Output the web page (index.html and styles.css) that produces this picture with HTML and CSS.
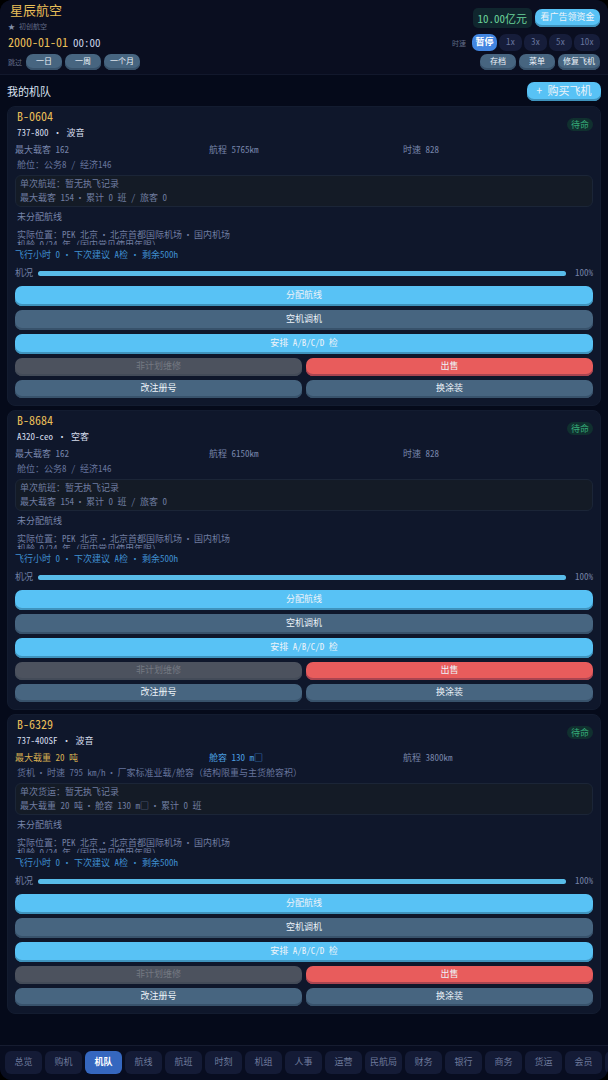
FILE: index.html
```html
<!DOCTYPE html>
<html lang="zh-CN">
<head>
<meta charset="utf-8">
<meta name="viewport" content="width=device-width, initial-scale=1">
<title>星辰航空</title>
<link rel="stylesheet" href="styles.css">
</head>
<body>
<div class="app">
  <header class="header">
    <div class="header-info">
      <h1 class="airline">星辰航空</h1>
      <div class="rank"><span class="star">★</span><span>初创航空</span></div>
      <div class="clock"><span class="date">2000-01-01</span><span class="time">00:00</span></div>
      <div class="row"><span class="tiny">跳过</span><button class="btn small">一日</button><button class="btn small">一周</button><button class="btn small">一个月</button></div>
    </div>
    <div class="header-tools">
      <div class="row funds"><span class="money">10.00亿元</span><button class="btn primary ad">看广告领资金</button></div>
      <div class="row speeds"><span class="tiny speed-label">时速</span><button class="speed active">暂停</button><button class="speed">1x</button><button class="speed">3x</button><button class="speed">5x</button><button class="speed wide">10x</button></div>
      <div class="row"><button class="btn small">存档</button><button class="btn small">菜单</button><button class="btn small fit">修复飞机</button></div>
    </div>
  </header>

  <main class="main">
    <div class="section-head">
      <h2 class="section-title">我的机队</h2>
      <button class="btn primary buy">+ 购买飞机</button>
    </div>

    <article class="card">
      <div class="card-head">
        <div><h3 class="reg">B-0604</h3><p class="model">737-800<span class="dot full">·</span>波音</p></div>
        <span class="status">待命</span>
      </div>
      <div class="stats"><span>最大载客 162</span><span>航程 5765km</span><span>时速 828</span></div>
      <p class="detail">舱位：公务8 / 经济146</p>
      <div class="record"><p>单次航班：暂无执飞记录</p><p>最大载客 154<span class="dot">·</span>累计 0 班 / 旅客 0</p></div>
      <p class="route">未分配航线</p>
      <div class="location"><p>实际位置：PEK 北京<span class="dot">·</span>北京首都国际机场<span class="dot">·</span>国内机场</p><p>机龄 0/24 年（国内常见使用年限）</p></div>
      <p class="hours">飞行小时 0<span class="dot">·</span>下次建议 A检<span class="dot">·</span>剩余500h</p>
      <div class="condition"><span>机况</span><div class="track"><div class="fill" style="width:100%"></div></div><span class="percent">100%</span></div>
      <div class="actions">
        <button class="btn primary span">分配航线</button>
        <button class="btn span">空机调机</button>
        <button class="btn primary span">安排 A/B/C/D 检</button>
        <button class="btn low" disabled>非计划维修</button>
        <button class="btn danger low">出售</button>
        <button class="btn low">改注册号</button>
        <button class="btn low">换涂装</button>
      </div>
    </article>

    <article class="card">
      <div class="card-head">
        <div><h3 class="reg">B-8684</h3><p class="model">A320-ceo<span class="dot full">·</span>空客</p></div>
        <span class="status">待命</span>
      </div>
      <div class="stats"><span>最大载客 162</span><span>航程 6150km</span><span>时速 828</span></div>
      <p class="detail">舱位：公务8 / 经济146</p>
      <div class="record"><p>单次航班：暂无执飞记录</p><p>最大载客 154<span class="dot">·</span>累计 0 班 / 旅客 0</p></div>
      <p class="route">未分配航线</p>
      <div class="location"><p>实际位置：PEK 北京<span class="dot">·</span>北京首都国际机场<span class="dot">·</span>国内机场</p><p>机龄 0/24 年（国内常见使用年限）</p></div>
      <p class="hours">飞行小时 0<span class="dot">·</span>下次建议 A检<span class="dot">·</span>剩余500h</p>
      <div class="condition"><span>机况</span><div class="track"><div class="fill" style="width:100%"></div></div><span class="percent">100%</span></div>
      <div class="actions">
        <button class="btn primary span">分配航线</button>
        <button class="btn span">空机调机</button>
        <button class="btn primary span">安排 A/B/C/D 检</button>
        <button class="btn low" disabled>非计划维修</button>
        <button class="btn danger low">出售</button>
        <button class="btn low">改注册号</button>
        <button class="btn low">换涂装</button>
      </div>
    </article>

    <article class="card">
      <div class="card-head">
        <div><h3 class="reg">B-6329</h3><p class="model">737-400SF<span class="dot full">·</span>波音</p></div>
        <span class="status">待命</span>
      </div>
      <div class="stats"><span class="gold">最大载重 20 吨</span><span class="blue">舱容 130 m□</span><span>航程 3800km</span></div>
      <p class="detail">货机<span class="dot">·</span>时速 795 km/h<span class="dot">·</span>厂家标准业载/舱容（结构限重与主货舱容积）</p>
      <div class="record"><p>单次货运：暂无执飞记录</p><p>最大载重 20 吨<span class="dot">·</span>舱容 130 m□<span class="dot">·</span>累计 0 班</p></div>
      <p class="route">未分配航线</p>
      <div class="location"><p>实际位置：PEK 北京<span class="dot">·</span>北京首都国际机场<span class="dot">·</span>国内机场</p><p>机龄 0/24 年（国内常见使用年限）</p></div>
      <p class="hours">飞行小时 0<span class="dot">·</span>下次建议 A检<span class="dot">·</span>剩余500h</p>
      <div class="condition"><span>机况</span><div class="track"><div class="fill" style="width:100%"></div></div><span class="percent">100%</span></div>
      <div class="actions">
        <button class="btn primary span">分配航线</button>
        <button class="btn span">空机调机</button>
        <button class="btn primary span">安排 A/B/C/D 检</button>
        <button class="btn low" disabled>非计划维修</button>
        <button class="btn danger low">出售</button>
        <button class="btn low">改注册号</button>
        <button class="btn low">换涂装</button>
      </div>
    </article>
  </main>

  <nav class="nav">
    <button class="tab">总览</button>
    <button class="tab">购机</button>
    <button class="tab current" aria-current="page">机队</button>
    <button class="tab">航线</button>
    <button class="tab">航班</button>
    <button class="tab">时刻</button>
    <button class="tab">机组</button>
    <button class="tab">人事</button>
    <button class="tab">运营</button>
    <button class="tab">民航局</button>
    <button class="tab">财务</button>
    <button class="tab">银行</button>
    <button class="tab">商务</button>
    <button class="tab">货运</button>
    <button class="tab">会员</button>
    <button class="tab" aria-label="更多"></button>
  </nav>
</div>
</body>
</html>
```
FILE: styles.css
```css
* { box-sizing: border-box; }
html { background: #000; }
body, h1, h2, h3, p { margin: 0; font-weight: 400; }
body, button {
  font-family: "Noto Sans Mono CJK SC", "Noto Sans CJK SC", monospace;
  font-size: 9px;
}
body { color: #7481a6; line-height: 12px; }
button { border: 0; padding: 0; margin: 0; white-space: nowrap; }

.app {
  display: flex;
  flex-direction: column;
  min-height: 100vh;
  background: #050a1a;
  border-radius: 12px;
  overflow: hidden;
}

.header {
  display: flex;
  justify-content: space-between;
  padding: 2px 8px 4px;
  background: #0a0e20;
  border-bottom: 1px solid #12182c;
}
.header-info { display: flex; flex-direction: column; }
.airline { padding-left: 2px; font-size: 13px; line-height: 16px; color: #e9bf58; }
.rank { display: flex; gap: 4px; height: 12px; margin-top: 2px; font-size: 7px; color: #626c88; }
.star { color: #8490aa; }
.clock { display: flex; gap: 5px; align-items: center; height: 16px; margin: 2px 0 4px; }
.date { font-size: 12px; color: #e9bf58; }
.time { font-size: 11px; color: #c8d2e8; }
.row { display: flex; align-items: center; gap: 3px; }
.tiny { font-size: 7px; color: #626c88; margin-right: 1px; }
.header-tools { display: flex; flex-direction: column; align-items: flex-end; padding-top: 6px; }
.money {
  padding: 0 5px;
  font-size: 11px;
  line-height: 20px;
  color: #6bd39a;
  background: #10262e;
  border-radius: 5px;
}
.speeds { gap: 2px; margin: 6px 0 3px; }
.speed-label { margin-right: 4px; }
.speed {
  width: 23px;
  height: 17px;
  padding-bottom: 2px;
  color: #66749c;
  background: #161d3a;
  border-radius: 7px;
}
.speed.active { width: 25px; color: #fff; font-weight: 700; background: #4285e0; }
.speed.wide { width: 26px; }

.btn {
  height: 20px;
  padding: 0 4px 3px;
  color: #edf3f9;
  background: #476580;
  border-radius: 7px;
  box-shadow: inset 0 -2px 0 #38526b;
}
.btn.primary { background: #58c2f5; box-shadow: inset 0 -2px 0 #3f93bd; }
.btn.danger { background: #e85c5c; box-shadow: inset 0 -2px 0 #a94450; }
.btn:disabled { color: #747982; background: #4c525e; box-shadow: inset 0 -2px 0 #434b58; }
.btn.small { min-width: 36px; height: 16px; font-size: 8px; }
.btn.fit { min-width: 42px; }
.btn.ad { width: 65px; height: 18px; }
.btn.low { height: 18px; }
.btn.buy { width: 74px; height: 19px; font-size: 11px; line-height: 12px; }

.main { flex: 1; padding: 5px 7px 0; display: flex; flex-direction: column; gap: 4px; }
.section-head { display: flex; justify-content: space-between; align-items: center; height: 22px; }
.section-title { font-size: 11px; color: #dbe3f2; }

.card {
  padding: 2px 7px 7px;
  background: #0f172b;
  border: 1px solid #131c30;
  border-radius: 8px;
}
.card-head { display: flex; justify-content: space-between; align-items: center; padding-left: 2px; }
.reg { font-size: 12px; line-height: 14px; color: #e9bf58; }
.model { margin-top: 3px; line-height: 14px; color: #d5ddec; }
.status {
  padding: 0 4px;
  line-height: 13px;
  color: #36ac79;
  background: #10302f;
  border-radius: 7px;
}
.dot { display: inline-block; width: 12px; text-align: center; }
.dot.full { width: 18px; }
.stats { display: grid; grid-template-columns: repeat(3, 1fr); gap: 4px; margin-top: 4px; color: #7785aa; }
.gold { color: #d8b052; }
.blue { color: #4b9fe0; }
.detail { margin: 3px 2px 4px; color: #66749c; }
.record {
  padding: 1px 4px;
  line-height: 14px;
  color: #707da0;
  background: #141b26;
  border: 1px solid #1b2537;
  border-radius: 6px;
}
.route { margin: 4px 2px 7px; color: #7785aa; }
.location { height: 15px; padding: 0 2px; line-height: 10px; overflow: hidden; color: #707da0; }
.hours { margin-top: 4px; color: #3f8fd0; }
.hours .dot { width: 14px; }
.condition { display: flex; align-items: center; gap: 5px; margin: 6px 0; }
.track { flex: 1; height: 5px; margin-right: 4px; background: #1a2744; border-radius: 3px; }
.fill { height: 100%; background: #58bce9; border-radius: 3px; }
.actions { display: grid; grid-template-columns: 1fr 1fr; gap: 4px; margin-top: 7px; }
.span { grid-column: span 2; }

.nav {
  display: flex;
  gap: 3px;
  padding: 5px 0 6px 5px;
  background: #080d20;
  border-top: 1px solid #161c30;
  overflow: hidden;
}
.tab {
  flex: 0 0 37px;
  height: 23px;
  padding-bottom: 2px;
  color: #6e7a9c;
  background: #141b36;
  border-radius: 6px;
}
.tab.current { color: #fff; font-weight: 700; background: #3567bf; }
```
